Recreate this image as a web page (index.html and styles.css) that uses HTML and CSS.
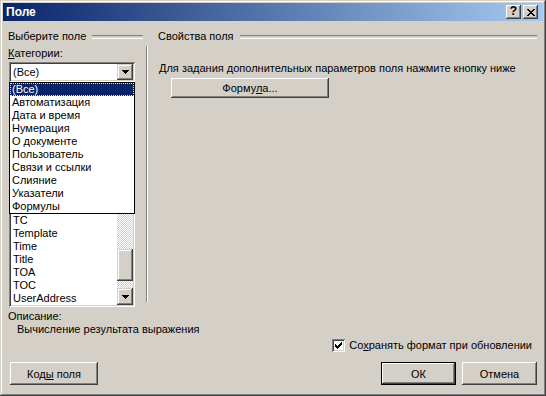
FILE: index.html
```html
<!DOCTYPE html>
<html lang="ru">

<head>
    <meta charset="UTF-8">
    <title>Поле</title>
    <link rel="stylesheet" href="styles.css">
</head>

<body>
    <div class="window">
        <div class="title-bar">
            <span class="title">Поле</span>
            <div class="caption-buttons">
                <span class="cap-btn help">?</span>
                <span class="cap-btn close">
                    <svg width="8" height="7" viewBox="0 0 8 7">
                        <path d="M0 0h2v1H0zM6 0h2v1H6zM1 1h2v1H1zM5 1h2v1H5zM2 2h4v1H2zM3 3h2v1H3zM2 4h4v1H2zM1 5h2v1H1zM5 5h2v1H5zM0 6h2v1H0zM6 6h2v1H6z" fill="#000"/>
                    </svg>
                </span>
            </div>
        </div>

        <div class="content">
            <div class="panes">
                <div class="pane-left">
                    <div class="group-title"><span>Выберите поле</span></div>
                    <div class="label"><u>К</u>атегории:</div>
                    <div class="combo">
                        <span class="combo-value">(Все)</span>
                        <span class="combo-btn">
                            <svg width="7" height="4" viewBox="0 0 7 4">
                                <path d="M0 0h7v1H0zM1 1h5v1H1zM2 2h3v1H2zM3 3h1v1H3z" fill="#000"/>
                            </svg>
                        </span>
                        <!-- open drop-down of the combo, lies over the field list -->
                        <ul class="dropdown">
                            <li class="selected"><span>(Все)</span></li>
                            <li>Автоматизация</li>
                            <li>Дата и время</li>
                            <li>Нумерация</li>
                            <li>О документе</li>
                            <li>Пользователь</li>
                            <li>Связи и ссылки</li>
                            <li>Слияние</li>
                            <li>Указатели</li>
                            <li>Формулы</li>
                        </ul>
                    </div>
                    <div class="listbox">
                        <!-- only the rows below the open drop-down are visible -->
                        <ul class="list-items">
                            <li>TC</li>
                            <li>Template</li>
                            <li>Time</li>
                            <li>Title</li>
                            <li>TOA</li>
                            <li>TOC</li>
                            <li>UserAddress</li>
                        </ul>
                        <div class="scrollbar">
                            <span class="sb-btn sb-up">
                                <svg width="7" height="4" viewBox="0 0 7 4">
                                    <path d="M3 0h1v1H3zM2 1h3v1H2zM1 2h5v1H1zM0 3h7v1H0z" fill="#000"/>
                                </svg>
                            </span>
                            <span class="sb-track"></span>
                            <span class="sb-thumb"></span>
                            <span class="sb-track sb-track-low"></span>
                            <span class="sb-btn sb-down">
                                <svg width="7" height="4" viewBox="0 0 7 4">
                                    <path d="M0 0h7v1H0zM1 1h5v1H1zM2 2h3v1H2zM3 3h1v1H3z" fill="#000"/>
                                </svg>
                            </span>
                        </div>
                    </div>
                </div>

                <div class="pane-right">
                    <div class="group-title"><span>Свойства поля</span></div>
                    <div class="pane-body">
                        <p class="hint">Для задания дополнительных параметров поля нажмите кнопку ниже</p>
                        <button class="btn formula-btn">Форму<u>л</u>а...</button>
                    </div>
                </div>
            </div>

            <div class="description">
                <div class="label">Описание:</div>
                <div class="description-text">Вычисление результата выражения</div>
            </div>

            <div class="check-row">
                <span class="checkbox">
                    <svg width="7" height="7" viewBox="0 0 7 7">
                        <path d="M6 0h1v1H6zM5 1h2v1H5zM0 2h1v1H0zM4 2h3v1H4zM0 3h2v1H0zM3 3h3v1H3zM0 4h5v1H0zM1 5h3v1H1zM2 6h1v1H2z" fill="#000"/>
                    </svg>
                </span>
                <span>Со<u>х</u>ранять формат при обновлении</span>
            </div>

            <div class="button-row">
                <button class="btn codes-btn">Код<u>ы</u> поля</button>
                <div class="button-group">
                    <button class="btn default-btn">ОК</button>
                    <button class="btn">Отмена</button>
                </div>
            </div>
        </div>
    </div>
</body>

</html>
```

FILE: styles.css
```css
* {
    margin: 0;
    padding: 0;
    box-sizing: border-box;
}

body {
    background-color: #d4d0c8;
    font-family: 'Liberation Sans', Arial, sans-serif;
    font-size: 11px;
    line-height: 13px;
    color: #000;
}

ul {
    list-style: none;
}

u {
    text-decoration: underline;
    text-underline-offset: 1px;
}

.window {
    width: 546px;
    height: 396px;
    padding: 3px;
    background-color: #d4d0c8;
    box-shadow: inset -1px -1px #404040, inset 1px 1px #d4d0c8,
        inset -2px -2px #808080, inset 2px 2px #fff;
    display: flex;
    flex-direction: column;
}

/* title bar */

.title-bar {
    height: 18px;
    background: linear-gradient(to right, #0a246a, #a6caf0);
    display: flex;
    align-items: center;
    justify-content: space-between;
    padding: 0 5px 0 3px;
}

.title {
    color: #fff;
    font-weight: 700;
    font-size: 12px;
}

.caption-buttons {
    display: flex;
    gap: 2px;
}

.cap-btn {
    width: 15px;
    height: 14px;
    background-color: #d4d0c8;
    box-shadow: inset -1px -1px #404040, inset 1px 1px #fff,
        inset -2px -2px #808080;
    display: flex;
    align-items: center;
    justify-content: center;
    font-weight: 700;
    font-size: 12px;
}

.cap-btn.help {
    padding-bottom: 1px;
}

/* raised button */

.btn {
    font-family: inherit;
    font-size: 11px;
    color: #000;
    background-color: #d4d0c8;
    border: none;
    box-shadow: inset -1px -1px #404040, inset 1px 1px #fff,
        inset -2px -2px #808080;
    height: 23px;
}

.default-btn {
    border: 1px solid #000;
}

/* main area */

.content {
    flex: 1;
    padding: 9px 6px 0 5px;
    display: flex;
    flex-direction: column;
}

.panes {
    display: grid;
    grid-template-columns: 135px 1fr;
    column-gap: 3px;
}

.group-title {
    display: flex;
    align-items: center;
    height: 13px;
    white-space: nowrap;
}

.group-title::after {
    content: "";
    flex: 1;
    height: 2px;
    margin-left: 6px;
    border-top: 1px solid #808080;
    border-bottom: 1px solid #fff;
}

.label {
    height: 13px;
    margin-top: 4px;
}

/* combo box and its open list */

.combo {
    position: relative;
    width: 126px;
    height: 20px;
    margin-top: 2px;
    margin-left: 1px;
    background-color: #fff;
    box-shadow: inset 1px 1px #808080, inset -1px -1px #fff,
        inset 2px 2px #404040, inset -2px -2px #d4d0c8;
    display: flex;
    align-items: center;
    justify-content: space-between;
    padding: 2px;
}

.combo-value {
    padding-left: 2px;
}

.combo-btn,
.sb-btn {
    width: 16px;
    height: 16px;
    background-color: #d4d0c8;
    box-shadow: inset -1px -1px #404040, inset 1px 1px #d4d0c8,
        inset -2px -2px #808080, inset 2px 2px #fff;
    display: flex;
    align-items: center;
    justify-content: center;
}

.dropdown {
    position: absolute;
    left: 0;
    top: 20px;
    width: 126px;
    border: 1px solid #000;
    background-color: #fff;
    z-index: 2;
}

.dropdown li {
    height: 13px;
    padding-left: 2px;
    white-space: nowrap;
}

.dropdown li.selected {
    background-color: #0a246a;
    color: #fff;
    outline: 1px dotted #f0e8a0;
    outline-offset: -1px;
}

/* field list */

.listbox {
    width: 126px;
    height: 206px;
    margin-top: 19px;
    margin-left: 1px;
    background-color: #fff;
    box-shadow: inset 1px 1px #808080, inset -1px -1px #fff,
        inset 2px 2px #404040, inset -2px -2px #d4d0c8;
    padding: 2px;
    display: flex;
}

.list-items {
    flex: 1;
    display: flex;
    flex-direction: column;
    justify-content: flex-end;
}

.list-items li {
    height: 13px;
    padding-left: 2px;
}

.scrollbar {
    width: 16px;
    display: flex;
    flex-direction: column;
}

.sb-track {
    flex: 1;
    background-color: #fff;
    background-image: repeating-conic-gradient(#d4d0c8 0 25%, #fff 0 50%);
    background-size: 2px 2px;
}

.sb-track-low {
    flex: 0 0 7px;
}

.sb-thumb {
    height: 32px;
    background-color: #d4d0c8;
    box-shadow: inset -1px -1px #404040, inset 1px 1px #d4d0c8,
        inset -2px -2px #808080, inset 2px 2px #fff;
}

.sb-down {
    height: 17px;
}

/* right pane */

.pane-right {
    display: flex;
    flex-direction: column;
}

.pane-right .group-title {
    padding-left: 12px;
}

.pane-body {
    flex: 1;
    margin: 3px 0 5px;
    border-left: 1px solid #808080;
    box-shadow: inset 1px 0 #fff;
    padding-left: 12px;
}

.hint {
    margin-top: 16px;
    white-space: nowrap;
}

.formula-btn {
    width: 158px;
    height: 20px;
    margin: 3px 0 0 12px;
}

/* bottom part */

.description {
    margin-top: 3px;
}

.description .label {
    margin-top: 0;
}

.description-text {
    padding-left: 9px;
}

.check-row {
    display: flex;
    justify-content: flex-end;
    align-items: center;
    gap: 4px;
    height: 13px;
    margin-top: 3px;
    padding-right: 5px;
}

.checkbox {
    width: 13px;
    height: 13px;
    background-color: #fff;
    box-shadow: inset 1px 1px #808080, inset -1px -1px #fff,
        inset 2px 2px #404040, inset -2px -2px #d4d0c8;
    display: flex;
    align-items: center;
    justify-content: center;
}

.button-row {
    display: flex;
    justify-content: space-between;
    margin-top: 10px;
}

.codes-btn {
    width: 88px;
    margin-left: 2px;
}

.button-group {
    display: flex;
    gap: 6px;
}

.button-group .btn {
    width: 75px;
}
```
